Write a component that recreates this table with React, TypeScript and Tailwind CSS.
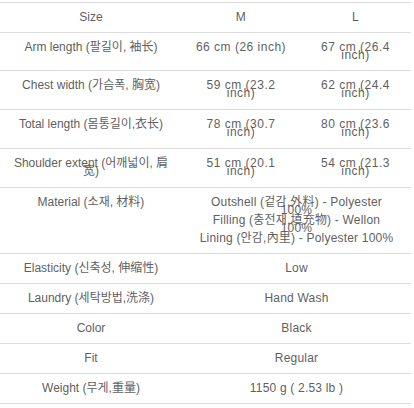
const font = { fontFamily: '"Liberation Sans", "Noto Sans CJK KR", sans-serif' }

type Row = {
  label: string[]
  m?: string[]
  l?: string[]
  span?: string[][]
  h: string
}

const rows: Row[] = [
  { label: ["Size"], m: ["M"], l: ["L"], h: "h-[30px]" },
  { label: ["Arm length (팔길이, 袖长)"], m: ["66 cm (26 inch)"], l: ["67 cm (26.4", "inch)"], h: "h-[38px]" },
  { label: ["Chest width (가슴폭, 胸宽)"], m: ["59 cm (23.2", "inch)"], l: ["62 cm (24.4", "inch)"], h: "h-[39px]" },
  { label: ["Total length (몸통길이,衣长)"], m: ["78 cm (30.7", "inch)"], l: ["80 cm (23.6", "inch)"], h: "h-[39px]" },
  { label: ["Shoulder extent (어깨넓이, 肩", "宽)"], m: ["51 cm (20.1", "inch)"], l: ["54 cm (21.3", "inch)"], h: "h-[39px]" },
  {
    label: ["Material (소재, 材料)"],
    span: [
      ["Outshell (겉감,外料) - Polyester", "100%"],
      ["Filling (충전재,填充物) - Wellon", "100%"],
      ["Lining (안감,內里) - Polyester 100%"],
    ],
    h: "h-[66px]",
  },
  { label: ["Elasticity (신축성, 伸缩性)"], span: [["Low"]], h: "h-[30px]" },
  { label: ["Laundry (세탁방법,洗涤)"], span: [["Hand Wash"]], h: "h-[30px]" },
  { label: ["Color"], span: [["Black"]], h: "h-[30px]" },
  { label: ["Fit"], span: [["Regular"]], h: "h-[30px]" },
  { label: ["Weight (무게,重量)"], span: [["1150 g ( 2.53 lb )"]], h: "h-[30px]" },
]

function Lines({ lines }: { lines: string[] }) {
  return (
    <>
      {lines.map((t, i) => (
        <div key={i} className={`whitespace-nowrap leading-[12px] ${i > 0 ? "-mt-[4px]" : ""}`}>
          {t}
        </div>
      ))}
    </>
  )
}

export default function App() {
  return (
    <div className="bg-white w-[414px] h-[408px] pt-[2px] text-[12px] text-[#5f5f5f]" style={font}>
      <div className="w-[411px] border-t border-[#dcdcdc]">
        {rows.map((r, i) => (
          <div key={i} className={`flex border-b border-[#dcdcdc] ${r.h}`}>
            <div className="w-[182px] flex flex-col items-center pt-[8px]">
              <Lines lines={r.label} />
            </div>
            {r.span ? (
              <div className="flex-1 flex flex-col items-center pt-[8px] tracking-[0.2px]">
                {r.span.map((item, j) => (
                  <div key={j} className={`flex flex-col items-center ${j > 0 ? "-mt-[2px]" : ""}`}>
                    <Lines lines={item} />
                  </div>
                ))}
              </div>
            ) : (
              <>
                <div className="w-[118px] flex flex-col items-center pt-[8px] tracking-[0.5px]">
                  <Lines lines={r.m ?? []} />
                </div>
                <div className="w-[111px] flex flex-col items-center pt-[8px] tracking-[0.5px]">
                  <Lines lines={r.l ?? []} />
                </div>
              </>
            )}
          </div>
        ))}
      </div>
    </div>
  )
}
